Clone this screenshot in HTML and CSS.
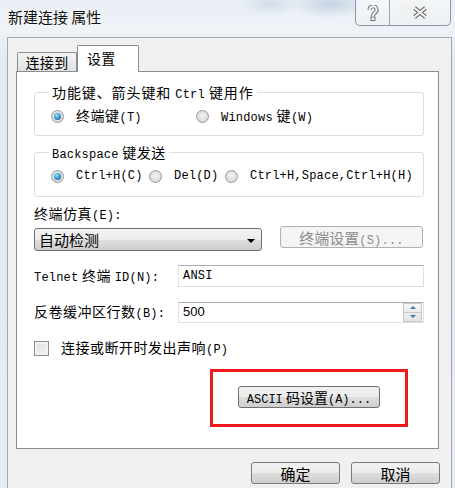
FILE: index.html
```html
<!DOCTYPE html>
<html lang="zh-CN">
<head>
<meta charset="utf-8">
<title>新建连接 属性</title>
<link rel="stylesheet" href="styles.css">
</head>
<body>
<div class="win">
  <div class="titlebar">
    <span class="title">新建连接 属性</span>
    <div class="caps">
      <div class="cap help">
        <svg width="12" height="16" viewBox="0 0 12 16">
          <path d="M2.5 5 A3.5 3.5 0 1 1 7.5 8 C6 9 6 9.5 6 11" fill="none" stroke="#707070" stroke-width="4"/>
          <path d="M2.5 5 A3.5 3.5 0 1 1 7.5 8 C6 9 6 9.5 6 11" fill="none" stroke="#f6f6f6" stroke-width="2"/>
          <rect x="4" y="12" width="4" height="3.5" fill="#f6f6f6" stroke="#707070" stroke-width="1"/>
        </svg>
      </div>
      <div class="cap close">
        <svg width="16" height="13" viewBox="0 0 16 13">
          <path d="M2.5 2 L13.5 11 M13.5 2 L2.5 11" stroke="#737373" stroke-width="4.2"/>
          <path d="M2.5 2 L13.5 11 M13.5 2 L2.5 11" stroke="#f4f4f4" stroke-width="2"/>
        </svg>
      </div>
    </div>
  </div>
  <div class="client">
    <div class="tabs">
      <div class="tab">连接到</div>
      <div class="tab active">设置</div>
    </div>
    <div class="panel">
      <fieldset class="group g1">
        <legend>功能键、箭头键和 <span class="en">Ctrl</span> 键用作</legend>
        <div class="opts opts2">
          <div class="opt"><span class="radio on"></span><span>终端键<span class="en">(T)</span></span></div>
          <div class="opt"><span class="radio"></span><span><span class="en">Windows</span> 键<span class="en">(W)</span></span></div>
        </div>
      </fieldset>
      <fieldset class="group g2">
        <legend><span class="en">Backspace</span> 键发送</legend>
        <div class="opts opts3">
          <div class="opt"><span class="radio on"></span><span class="en">Ctrl+H(C)</span></div>
          <div class="opt"><span class="radio"></span><span class="en">Del(D)</span></div>
          <div class="opt"><span class="radio"></span><span class="en">Ctrl+H,Space,Ctrl+H(H)</span></div>
        </div>
      </fieldset>
      <div class="label emu-label">终端仿真<span class="en">(E):</span></div>
      <div class="emu-row">
        <div class="combo"><span>自动检测</span><span class="arrow"></span></div>
        <div class="btn disabled"><span>终端设置<span class="en">(S)...</span></span></div>
      </div>
      <div class="field-row">
        <div class="label"><span class="en">Telnet</span> 终端 <span class="en">ID(N):</span></div>
        <div class="input"><span class="en">ANSI</span></div>
      </div>
      <div class="field-row">
        <div class="label">反卷缓冲区行数<span class="en">(B):</span></div>
        <div class="input spin-input"><span class="num">500</span>
          <div class="spin"><div class="spin-up"></div><div class="spin-down"></div></div>
        </div>
      </div>
      <div class="check-row">
        <span class="check"></span>
        <span>连接或断开时发出声响<span class="en">(P)</span></span>
      </div>
      <div class="highlight">
        <div class="btn ascii"><span><span class="en">ASCII</span> 码设置<span class="en">(A)...</span></span></div>
      </div>
    </div>
    <div class="footer">
      <div class="btn dlg">确定</div>
      <div class="btn dlg">取消</div>
    </div>
  </div>
</div>
</body>
</html>
```
FILE: styles.css
```css
* { box-sizing: border-box; }
html, body { margin: 0; padding: 0; }
body {
  width: 455px;
  height: 488px;
  overflow: hidden;
  font-family: "Noto Sans CJK SC", sans-serif;
  font-size: 14px;
  color: #000;
  background:
    radial-gradient(ellipse 40px 14px at 330px 4px, rgba(120,150,190,0.30), transparent),
    radial-gradient(ellipse 22px 12px at 410px 6px, rgba(190,190,120,0.25), transparent),
    radial-gradient(ellipse 30px 12px at 270px 4px, rgba(160,180,210,0.30), transparent),
    linear-gradient(to bottom, #e8eef4 0px, #eef3f8 30px, #e2eaf2 60px, #e5edf3 100%);
}
.en {
  font-family: "Liberation Mono", monospace;
  font-size: 12px;
  letter-spacing: 0.2px;
}
.win {
  display: flex;
  flex-direction: column;
  height: 488px;
}
.titlebar {
  height: 37px;
  display: flex;
  justify-content: space-between;
  align-items: flex-start;
  flex: none;
}
.title {
  margin: 8px 0 0 8px;
  font-size: 15px;
  line-height: 18px;
  color: #111;
  text-shadow: 0 0 6px #fff, 0 0 3px #fff;
}
.caps {
  display: flex;
  height: 26px;
  margin-right: 4px;
  border: 1px solid #8d969e;
  border-top: none;
  border-radius: 0 0 5px 5px;
  background: linear-gradient(to bottom, rgba(255,255,255,0.55), rgba(235,240,245,0.7));
}
.cap {
  display: flex;
  align-items: center;
  justify-content: center;
}
.cap.help {
  width: 34px;
  border-right: 1px solid #9aa3ab;
}
.cap.close { width: 60px; }

.client {
  flex: 1;
  margin-left: 7px;
  width: 445px;
  background: #f0f0f0;
  border: 1px solid #a3a8ad;
  border-bottom: none;
  padding: 7px 0 0 8px;
}
.tabs {
  display: flex;
  align-items: flex-end;
  height: 26px;
  padding-left: 1px;
  position: relative;
  z-index: 1;
}
.tab {
  width: 60px;
  height: 19px;
  border: 1px solid #898c95;
  border-bottom: none;
  border-radius: 2px 2px 0 0;
  background: linear-gradient(to bottom, #f3f3f3, #e2e2e2);
  text-align: center;
  line-height: 18px;
  font-size: 14px;
  letter-spacing: 0.3px;
}
.tab.active {
  width: 62px;
  height: 27px;
  margin-bottom: -1px;
  background: #fff;
  line-height: 24px;
  text-align: left;
  padding-left: 9px;
}
.panel {
  width: 423px;
  height: 378px;
  border: 1px solid #898c95;
  background: #fff;
  padding-left: 17px;
  letter-spacing: 0.5px;
}
.group {
  margin: 0;
  padding: 0;
  width: 390px;
  min-width: 0;
  border: 1px solid #d5dfe5;
  border-radius: 3px;
}
.group legend {
  margin-left: 14px;
  padding: 0 3px;
  line-height: 16px;
  height: 16px;
}
.g1 legend { letter-spacing: 0.9px; }
.g1 { margin-top: 12px; padding-bottom: 10px; }
.g2 { margin-top: 8px; padding-bottom: 11px; }
.opts {
  display: grid;
  padding: 7px 0 0 16px;
  height: 25px;
}
.opts2 { grid-template-columns: 145px auto; }
.opts3 { grid-template-columns: 98px 76px auto; }
.opt {
  display: flex;
  align-items: center;
  gap: 12px;
  height: 18px;
  line-height: 18px;
  white-space: nowrap;
}
.radio {
  flex: none;
  width: 13px;
  height: 13px;
  border-radius: 50%;
  border: 1px solid #9a9a9a;
  background: radial-gradient(circle at 50% 45%, #f4f4f4 0, #e2e2e2 45%, #cfcfcf 100%);
  display: flex;
  align-items: center;
  justify-content: center;
}
.radio.on::after {
  content: "";
  width: 7px;
  height: 7px;
  border-radius: 50%;
  background: radial-gradient(circle at 40% 35%, #9fe2ff 0, #3a9fd8 45%, #16568f 100%);
}
.label {
  line-height: 18px;
  white-space: nowrap;
}
.emu-label { margin-top: 7px; }
.emu-row {
  display: flex;
  align-items: flex-start;
  gap: 18px;
  margin-top: 3px;
}
.combo {
  width: 228px;
  height: 23px;
  border: 1px solid #707070;
  border-radius: 3px;
  background: linear-gradient(to bottom, #f3f3f3 0, #ebebeb 50%, #dddddd 51%, #cfcfcf 100%);
  display: flex;
  align-items: center;
  justify-content: space-between;
  padding: 0 6px 0 4px;
  font-size: 15px;
  letter-spacing: 0;
}
.arrow {
  width: 0;
  height: 0;
  border-left: 4px solid transparent;
  border-right: 4px solid transparent;
  border-top: 4px solid #000;
  margin-top: 2px;
}
.btn {
  display: flex;
  align-items: center;
  justify-content: center;
  height: 22px;
  border: 1px solid #707070;
  border-radius: 3px;
  background: linear-gradient(to bottom, #f2f2f2 0, #ebebeb 50%, #dddddd 51%, #cfcfcf 100%);
  white-space: nowrap;
}
.btn.disabled {
  width: 143px;
  margin-top: -2px;
  border-color: #adb2b5;
  background: #f4f4f4;
  color: #8d8d8d;
  font-size: 15px;
  letter-spacing: 0;
}
.field-row {
  display: flex;
  align-items: center;
  height: 22px;
  margin-top: 14px;
}
.field-row .label { width: 144px; }
.input {
  width: 246px;
  height: 22px;
  border: 1px solid #dbdfe6;
  border-top-color: #abadb3;
  border-left-color: #e2e3ea;
  background: #fff;
  display: flex;
  align-items: center;
  padding-left: 4px;
  line-height: 18px;
}
.spin-input {
  height: 21px;
  justify-content: space-between;
  padding-right: 1px;
}
.num {
  font-family: "Liberation Sans", sans-serif;
  font-size: 13px;
  letter-spacing: 0;
}
.spin {
  width: 19px;
  height: 19px;
  display: flex;
  flex-direction: column;
  border: 1px solid #c4c8cc;
  background: linear-gradient(to bottom, #f6f6f6, #e4e4e4);
}
.spin-up, .spin-down {
  flex: 1;
  display: flex;
  align-items: center;
  justify-content: center;
}
.spin-up { border-bottom: 1px solid #c4c8cc; }
.spin-up::after {
  content: "";
  border-left: 3px solid transparent;
  border-right: 3px solid transparent;
  border-bottom: 3px solid #4d6fb4;
}
.spin-down::after {
  content: "";
  border-left: 3px solid transparent;
  border-right: 3px solid transparent;
  border-top: 3px solid #4d6fb4;
}
.check-row {
  display: flex;
  align-items: center;
  gap: 12px;
  height: 18px;
  margin-top: 16px;
  line-height: 18px;
}
.check {
  width: 15px;
  height: 15px;
  border: 1px solid #8f8f8f;
  background: linear-gradient(135deg, #dcdcdc, #f6f6f6);
  box-shadow: inset 0 0 0 2px #f2f2f2;
}
.highlight {
  width: 198px;
  height: 58px;
  margin: 12px 0 0 176px;
  border: 3px solid #f0181f;
  padding: 14px 0 0 25px;
}
.btn.ascii {
  width: 142px;
  letter-spacing: 0;
}
.btn.ascii .en { letter-spacing: 0; }
.footer {
  display: flex;
  justify-content: flex-end;
  gap: 11px;
  width: 424px;
  margin-top: 13px;
}
.btn.dlg {
  width: 89px;
  font-size: 15px;
  border-color: #7a7a7a;
}
```
